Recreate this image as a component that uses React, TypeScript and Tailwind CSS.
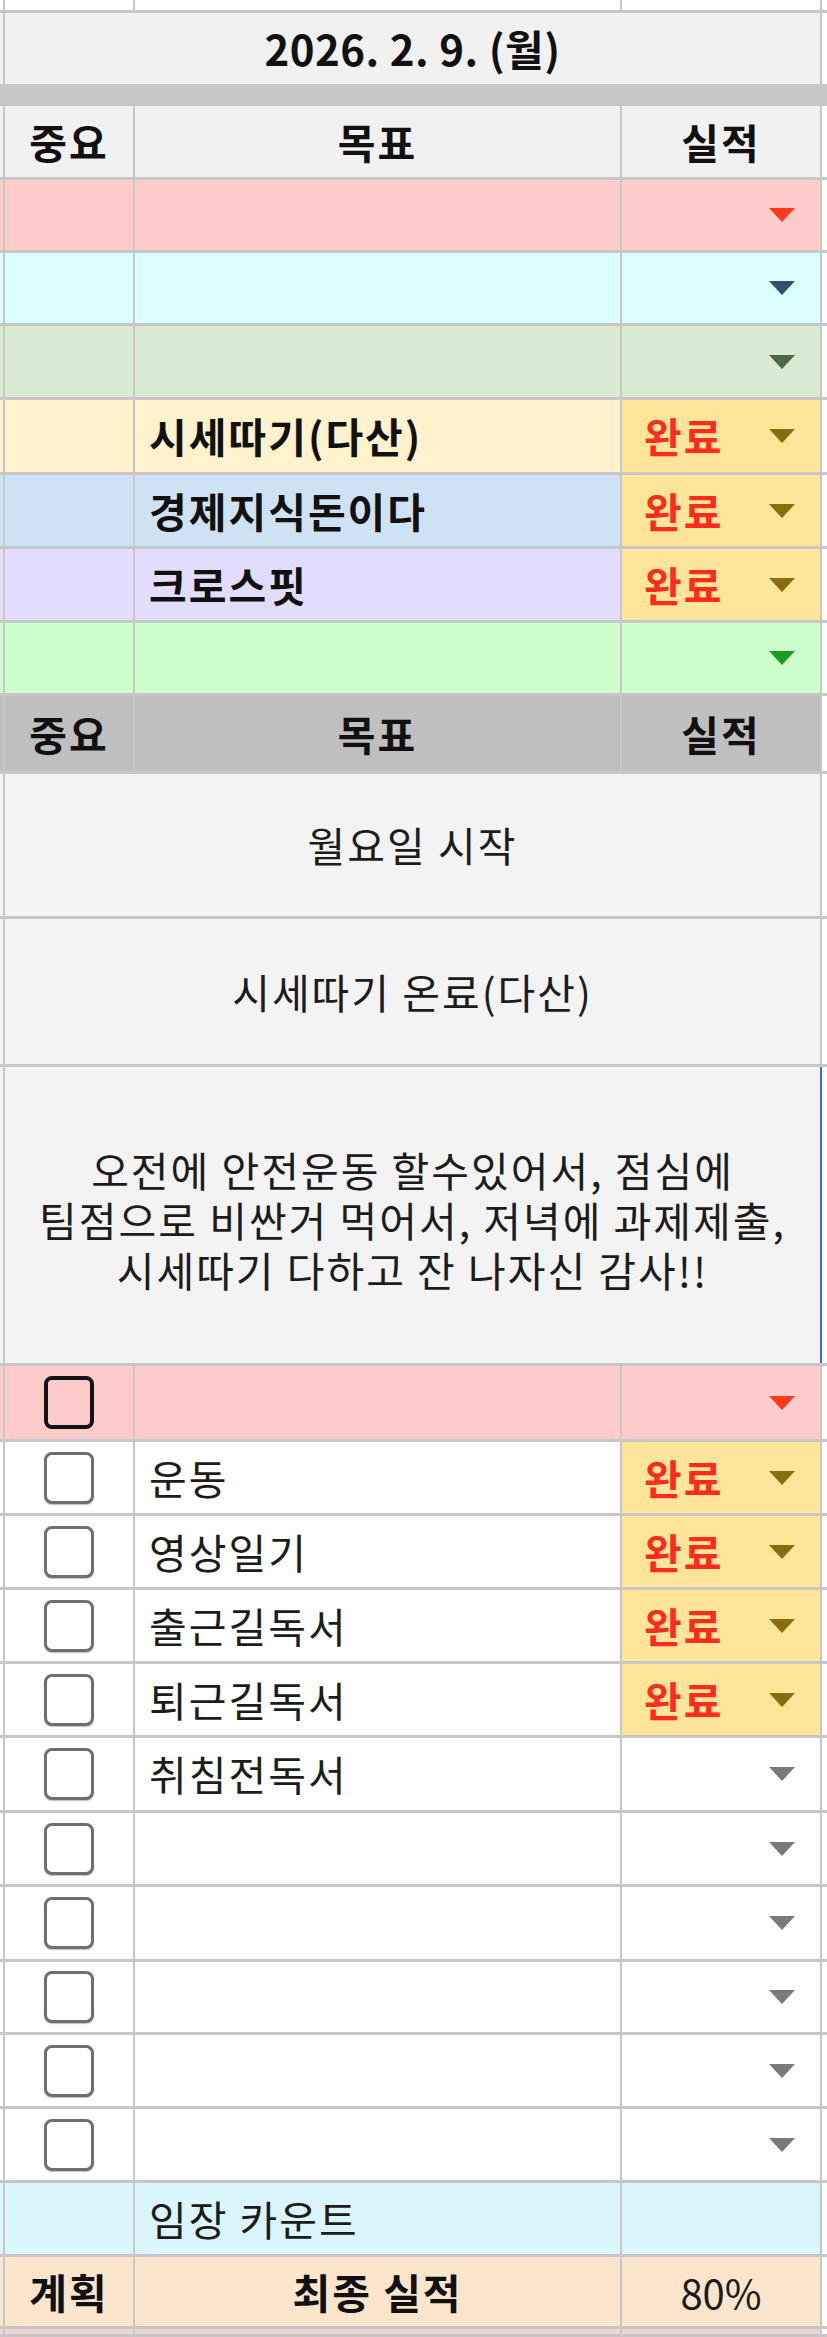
import React from "react";

const LINE = "border-[#c7c7c7]";

function Tri({ color }: { color: string }) {
  return (
    <svg width="26" height="14" viewBox="0 0 26 14" className="ml-auto mr-[25px] shrink-0">
      <path d="M0 0 H26 L13 14 Z" fill={color} />
    </svg>
  );
}

function Check({ dark }: { dark?: boolean }) {
  return dark ? (
    <div className="w-[50px] h-[53px] rounded-[8px] border-[4px] border-[#141414] bg-transparent" />
  ) : (
    <div className="w-[50px] h-[52px] rounded-[8px] border-[3px] border-[#6f6f6f] bg-white shadow-[0_1px_1px_rgba(0,0,0,0.25)]" />
  );
}

function Row({
  h,
  bg,
  c1,
  c2,
  c3,
  c3bg,
  c1center = true,
  c2center = false,
  c3center = false,
}: {
  h: string;
  bg: string;
  c1?: React.ReactNode;
  c2?: React.ReactNode;
  c3?: React.ReactNode;
  c3bg?: string;
  c1center?: boolean;
  c2center?: boolean;
  c3center?: boolean;
}) {
  return (
    <div className={`flex ${h} ${bg} border-b-[3px] ${LINE}`}>
      <div className="w-[3px] shrink-0" />
      <div className={`w-[130px] shrink-0 border-l-[2px] ${LINE} flex items-center ${c1center ? "justify-center" : ""}`}>{c1}</div>
      <div className={`w-[487px] shrink-0 border-l-[2px] ${LINE} flex items-center ${c2center ? "justify-center" : "pl-[14px]"}`}>{c2}</div>
      <div className={`w-[200px] shrink-0 border-l-[2px] ${LINE} flex items-center ${c3center ? "justify-center" : ""} ${c3bg ?? ""}`}>{c3}</div>
      <div className={`w-[7px] shrink-0 border-l-[2px] ${LINE} bg-white`} />
    </div>
  );
}

function Merged({ h, bg, children, rightBlue }: { h: string; bg: string; children: React.ReactNode; rightBlue?: boolean }) {
  return (
    <div className={`flex ${h} ${bg} border-b-[3px] ${LINE}`}>
      <div className="w-[3px] shrink-0" />
      <div className={`w-[817px] shrink-0 border-l-[2px] ${LINE} flex items-center justify-center text-center`}>{children}</div>
      <div className={`w-[7px] shrink-0 border-l-[2px] ${rightBlue ? "border-[#3d6bd6]" : LINE} bg-white`} />
    </div>
  );
}

const Done = () => (
  <>
    <span className="pl-[22px] font-bold text-[#ff2b1c]">완료</span>
    <Tri color="#8a6c12" />
  </>
);

export default function App() {
  const checkRows: { h: string; label: string; done: boolean }[] = [
    { h: "h-[74px]", label: "운동", done: true },
    { h: "h-[74px]", label: "영상일기", done: true },
    { h: "h-[74px]", label: "출근길독서", done: true },
    { h: "h-[74px]", label: "퇴근길독서", done: true },
    { h: "h-[75px]", label: "취침전독서", done: false },
    { h: "h-[74px]", label: "", done: false },
    { h: "h-[75px]", label: "", done: false },
    { h: "h-[73px]", label: "", done: false },
    { h: "h-[74px]", label: "", done: false },
    { h: "h-[74px]", label: "", done: false },
  ];

  return (
    <div className="w-[827px] h-[2337px] overflow-hidden bg-white text-[41px] leading-[1.2] tracking-[2px] text-[#1c1c1c] font-['Noto_Sans_CJK_KR','Noto_Sans',sans-serif]">
      {/* top partial row */}
      <Row h="h-[13px]" bg="bg-white" />
      {/* date */}
      <Merged h="h-[74px]" bg="bg-[#f1f1f1]">
        <span className="font-bold text-[42px] tracking-[0.5px] text-[#111]">2026. 2. 9. (월)</span>
      </Merged>
      {/* band */}
      <div className="h-[19px] bg-[#c6c6c6]" />
      {/* header 1 */}
      <Row
        h="h-[74px]"
        bg="bg-[#f1f1f1]"
        c1={<span className="font-bold text-[#111]">중요</span>}
        c2={<span className="font-bold text-[#111]">목표</span>}
        c3={<span className="font-bold text-[#111]">실적</span>}
        c2center
        c3center
      />
      <Row h="h-[73px]" bg="bg-[#ffcccc]" c3={<Tri color="#ff3a1c" />} />
      <Row h="h-[73px]" bg="bg-[#dcffff]" c3={<Tri color="#34506f" />} />
      <Row h="h-[74px]" bg="bg-[#d9ead3]" c3={<Tri color="#4c6a47" />} />
      <Row
        h="h-[75px]"
        bg="bg-[#fff2cc]"
        c2={<span className="font-bold text-[#111]">시세따기(다산)</span>}
        c3={<Done />}
        c3bg="bg-[#ffe599]"
      />
      <Row
        h="h-[74px]"
        bg="bg-[#cfe2f3]"
        c2={<span className="font-bold text-[#111]">경제지식돈이다</span>}
        c3={<Done />}
        c3bg="bg-[#ffe599]"
      />
      <Row
        h="h-[74px]"
        bg="bg-[#e2dcfd]"
        c2={<span className="font-bold text-[#111]">크로스핏</span>}
        c3={<Done />}
        c3bg="bg-[#ffe599]"
      />
      <Row h="h-[73px]" bg="bg-[#ccffcc]" c3={<Tri color="#1f9a28" />} />
      {/* header 2 */}
      <Row
        h="h-[78px]"
        bg="bg-[#bfbfbf]"
        c1={<span className="font-bold text-[#111]">중요</span>}
        c2={<span className="font-bold text-[#111]">목표</span>}
        c3={<span className="font-bold text-[#111]">실적</span>}
        c2center
        c3center
      />
      {/* memos */}
      <Merged h="h-[145px]" bg="bg-[#f3f3f3]">
        <span>월요일 시작</span>
      </Merged>
      <Merged h="h-[148px]" bg="bg-[#f3f3f3]">
        <span>시세따기 온료(다산)</span>
      </Merged>
      <Merged h="h-[299px]" bg="bg-[#f3f3f3]" rightBlue>
        <div className="flex flex-col items-center pt-[8px]">
          <div className="leading-[50px]">오전에 안전운동 할수있어서, 점심에</div>
          <div className="leading-[50px]">팀점으로 비싼거 먹어서, 저녁에 과제제출,</div>
          <div className="leading-[50px]">시세따기 다하고 잔 나자신 감사!!</div>
        </div>
      </Merged>
      {/* checklist */}
      <Row h="h-[76px]" bg="bg-[#ffcccc]" c1={<Check dark />} c3={<Tri color="#ff3a1c" />} />
      {checkRows.map((r, i) => (
        <Row
          key={i}
          h={r.h}
          bg="bg-white"
          c1={<Check />}
          c2={r.label ? <span>{r.label}</span> : null}
          c3={r.done ? <Done /> : <Tri color="#7a7a7a" />}
          c3bg={r.done ? "bg-[#ffe599]" : ""}
        />
      ))}
      <Row h="h-[74px]" bg="bg-[#dbf5fc]" c2={<span>임장 카운트</span>} />
      <Row
        h="h-[72px]"
        bg="bg-[#fce5cd]"
        c1={<span className="font-bold text-[#111]">계획</span>}
        c2={<span className="font-bold text-[#111]">최종 실적</span>}
        c3={<span className="tracking-normal text-[40px]">80%</span>}
        c2center
        c3center
      />
      <Row h="h-[8px]" bg="bg-[#efd2d2]" />
    </div>
  );
}
